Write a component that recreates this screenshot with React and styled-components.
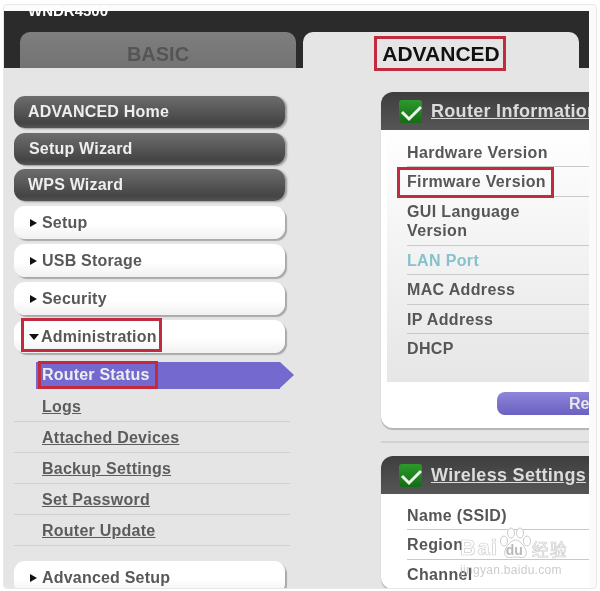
import React from 'react';
import styled, { createGlobalStyle } from 'styled-components';

const GlobalStyle = createGlobalStyle`
  html, body { margin: 0; padding: 0; background: #fff; }
  body { font-family: "Liberation Sans", Arial, sans-serif; }
`;

const Page = styled.div`
  position: relative;
  width: 600px;
  height: 591px;
  overflow: hidden;
  background: #fff;
  filter: blur(0.55px);
`;

const Frame = styled.div`
  margin: 4px 3px 0;
  height: 585px;
  border: 1px solid #e8e8e8;
  border-radius: 4px;
  padding: 6px 7px 0 0;
  background: #fbfbfb;
  box-sizing: border-box;
  display: flex;
  flex-direction: column;
  overflow: hidden;
`;

const Header = styled.div`
  height: 57px;
  flex: none;
  background: #2b2b2b;
  display: flex;
  flex-direction: column;
`;

const Product = styled.div`
  flex: none;
  margin: -9px 0 0 24px;
  height: 30px;
  line-height: 18px;
  font-size: 15px;
  font-weight: bold;
  color: #fff;
`;

const Tabs = styled.div`
  display: flex;
  gap: 7px;
  padding-left: 16px;
  flex: 1;
  min-height: 0;
`;

const Tab = styled.div`
  width: 276px;
  border-radius: 10px 10px 0 0;
  text-align: center;
  font-size: ${p => (p.$active ? 21 : 20)}px;
  font-weight: bold;
  line-height: 44px;
  color: ${p => (p.$active ? '#111' : '#555')};
  background: ${p => (p.$active ? '#e5e5e5' : 'linear-gradient(#7e7e7e, #737373)')};
`;

const Mark = styled.span`
  position: relative;
  display: inline-block;
  &::after {
    content: '';
    position: absolute;
    inset: ${p => p.$inset};
    border: 3px solid #c22a3d;
  }
`;

const Body = styled.div`
  flex: 1;
  display: flex;
  background: #e5e5e5;
  overflow: hidden;
`;

const Sidebar = styled.div`
  width: 277px;
  margin-left: 10px;
  padding-top: 28px;
  flex: none;
`;

const DarkItem = styled.div`
  width: 271px;
  height: 32px;
  margin-bottom: 4.5px;
  box-sizing: border-box;
  padding-left: ${p => p.$pad || 14}px;
  border-radius: 11px;
  background: linear-gradient(#6d6d6d, #444 85%, #555);
  box-shadow: 2px 1px 2px #999;
  color: #eee;
  font-size: 16px;
  font-weight: bold;
  line-height: 31px;
  letter-spacing: 0.2px;
`;

const LightItem = styled.div`
  width: 271px;
  height: 33px;
  margin-bottom: 5px;
  box-sizing: border-box;
  padding: 1px 0 0 16px;
  display: flex;
  align-items: center;
  gap: 5px;
  border-radius: 11px;
  background: linear-gradient(#fff 55%, #f1f1f1);
  box-shadow: 2px 2px 1px #a9a9a9;
  color: #585858;
  font-size: 16px;
  font-weight: bold;
  letter-spacing: 0.2px;
`;

const Caret = styled.i`
  width: 0;
  height: 0;
  flex: none;
  border-style: solid;
  ${p => (p.$open
    ? 'border-width: 6px 5px 0 5px; border-color: #111 transparent transparent; margin: 0 -3px 0 -1px;'
    : 'border-width: 4.5px 0 4.5px 7px; border-color: transparent transparent transparent #111;')}
`;

const Current = styled.div`
  position: relative;
  width: 244px;
  height: 27px;
  margin: 9px 0 2px 22px;
  padding-left: 6px;
  box-sizing: border-box;
  background: #7469cf;
  color: #eee;
  font-size: 16px;
  font-weight: bold;
  line-height: 26px;
  letter-spacing: 0.2px;
  &::after {
    content: '';
    position: absolute;
    left: 100%;
    top: 0;
    border-style: solid;
    border-width: 13.5px 0 13.5px 14px;
    border-color: transparent transparent transparent #7469cf;
  }
`;

const SubItem = styled.div`
  height: 31px;
  box-sizing: border-box;
  border-bottom: 1px solid #d0d0d0;
  padding: 6px 0 0 28px;
  width: 276px;
  color: #5c5c5c;
  font-size: 16px;
  font-weight: bold;
  line-height: 20px;
  letter-spacing: 0.25px;
  text-decoration: underline;
`;

const SubList = styled.div`
  margin-bottom: 15px;
`;

const Content = styled.div`
  margin-left: 90px;
  padding-top: 24px;
  width: 300px;
  flex: none;
`;

const Panel = styled.div`
  background: #fff;
  border-radius: 12px 0 0 12px;
  box-shadow: 0 2px 1px #b5b5b5;
`;

const PanelHeader = styled.div`
  height: 38px;
  display: flex;
  align-items: center;
  gap: 9px;
  padding-left: 18px;
  border-radius: 12px 0 0 0;
  background: linear-gradient(#3e3e3e, #565656);
`;

const CheckBox = styled.span`
  width: 23px;
  height: 23px;
  flex: none;
  display: flex;
  border-radius: 3px;
  background: linear-gradient(#2c9a2c, #166b16);
`;

const PanelTitle = styled.span`
  color: #dcdcdc;
  font-size: 18px;
  font-weight: bold;
  letter-spacing: 0.3px;
  text-decoration: underline;
  white-space: nowrap;
`;

const Rows = styled.div`
  margin-left: 6px;
  padding: 7.5px 0 0 20px;
  height: 252px;
  box-sizing: border-box;
  background: linear-gradient(#fff, #e6e6e6);
`;

const Row = styled.div`
  padding: 5px 0 4px;
  border-bottom: ${p => (p.$last ? 'none' : '1px solid #c9c9c9')};
  color: ${p => (p.$link ? '#86c2cc' : '#565656')};
  font-size: 16px;
  font-weight: bold;
  line-height: 19.5px;
  letter-spacing: 0.35px;
`;

const PlainRows = styled.div`
  padding: 6.5px 0 0 26px;
`;

const LabelWrap = styled.div`
  width: 140px;
`;

const ButtonRow = styled.div`
  padding: 10px 0 13px 116px;
`;

const ReturnButton = styled.div`
  height: 23px;
  border-radius: 8px 0 0 8px;
  padding-left: 72px;
  background: linear-gradient(#8f86dc, #6a60c0);
  color: #e8e8e8;
  font-size: 16px;
  font-weight: bold;
  line-height: 23px;
`;

const Divider = styled.div`
  height: 2px;
  background: #d2d2d2;
  margin: 13px 0;
`;

const Watermark = styled.div`
  position: absolute;
  left: 460px;
  top: 527px;
  width: 110px;
  white-space: nowrap;
  font-family: "Liberation Sans", sans-serif;
`;

const WaterLogo = styled.div`
  display: flex;
  align-items: flex-end;
  height: 32px;
  font-size: 22px;
  line-height: 22px;
  font-weight: bold;
  letter-spacing: 1.5px;
  color: rgba(255, 255, 255, 0.8);
  -webkit-text-stroke: 0.7px rgba(185, 185, 185, 0.7);
`;

const PawBox = styled.span`
  position: relative;
  width: 33px;
  height: 32px;
  flex: none;
`;

const PawText = styled.span`
  position: absolute;
  left: 7px;
  bottom: 2px;
  font-size: 14px;
  line-height: 14px;
  letter-spacing: 0;
  color: #b9b9b9;
  -webkit-text-stroke: 0;
`;

const WaterCjk = styled.span`
  font-family: "Noto Sans CJK SC", sans-serif;
  font-size: 17px;
  line-height: 20px;
  font-weight: normal;
  letter-spacing: 1px;
`;

const WaterUrl = styled.div`
  font-size: 12px;
  line-height: 14px;
  color: rgba(190, 190, 190, 0.8);
  margin-top: 4px;
  letter-spacing: 0.3px;
`;

const Check = () => (
  <CheckBox>
    <svg width="23" height="23" viewBox="0 0 23 23">
      <path d="M3 12 L10 19 L22 7" fill="none" stroke="#e8f5e8" strokeWidth="3" />
    </svg>
  </CheckBox>
);

const Paw = () => (
  <svg width="33" height="32" viewBox="0 0 33 32">
    <g fill="rgba(255,255,255,.8)" stroke="rgba(185,185,185,.75)">
      <ellipse cx="5" cy="14" rx="3.5" ry="5" />
      <ellipse cx="12" cy="6" rx="3.5" ry="5" />
      <ellipse cx="21" cy="6" rx="3.5" ry="5" />
      <ellipse cx="28" cy="14" rx="3.5" ry="5" />
      <path d="M16.5 13 C11 13 4 23 6 28 C8 32 13 30 16.5 30 C20 30 25 32 27 28 C29 23 22 13 16.5 13 Z" />
    </g>
  </svg>
);

const App = () => (
  <Page>
    <GlobalStyle />
    <Frame>
      <Header>
        <Product>WNDR4500</Product>
        <Tabs>
          <Tab>BASIC</Tab>
          <Tab $active>
            <Mark $inset="4px -6px 5px -8px">ADVANCED</Mark>
          </Tab>
        </Tabs>
      </Header>
      <Body>
        <Sidebar>
          <DarkItem>ADVANCED Home</DarkItem>
          <DarkItem $pad={15}>Setup Wizard</DarkItem>
          <DarkItem>WPS Wizard</DarkItem>
          <LightItem><Caret />Setup</LightItem>
          <LightItem><Caret />USB Storage</LightItem>
          <LightItem><Caret />Security</LightItem>
          <LightItem>
            <Caret $open />
            <Mark $inset="-10px -5px -6px -20px">Administration</Mark>
          </LightItem>
          <Current>
            <Mark $inset="-1px -8px -1px -4px">Router Status</Mark>
          </Current>
          <SubList>
            <SubItem>Logs</SubItem>
            <SubItem>Attached Devices</SubItem>
            <SubItem>Backup Settings</SubItem>
            <SubItem>Set Password</SubItem>
            <SubItem>Router Update</SubItem>
          </SubList>
          <LightItem><Caret />Advanced Setup</LightItem>
        </Sidebar>
        <Content>
          <Panel>
            <PanelHeader>
              <Check />
              <PanelTitle>Router Information</PanelTitle>
            </PanelHeader>
            <Rows>
              <Row>Hardware Version</Row>
              <Row><Mark $inset="-5px -8px -6px -10px">Firmware Version</Mark></Row>
              <Row><LabelWrap>GUI Language Version</LabelWrap></Row>
              <Row $link>LAN Port</Row>
              <Row>MAC Address</Row>
              <Row>IP Address</Row>
              <Row $last>DHCP</Row>
            </Rows>
            <ButtonRow>
              <ReturnButton>Refresh</ReturnButton>
            </ButtonRow>
          </Panel>
          <Divider />
          <Panel>
            <PanelHeader>
              <Check />
              <PanelTitle>Wireless Settings</PanelTitle>
            </PanelHeader>
            <PlainRows>
              <Row>Name (SSID)</Row>
              <Row>Region</Row>
              <Row>Channel</Row>
            </PlainRows>
          </Panel>
        </Content>
      </Body>
    </Frame>
    <Watermark>
      <WaterLogo>
        Bai
        <PawBox><Paw /><PawText>du</PawText></PawBox>
        <WaterCjk>经验</WaterCjk>
      </WaterLogo>
      <WaterUrl>jingyan.baidu.com</WaterUrl>
    </Watermark>
  </Page>
);

export default App;
